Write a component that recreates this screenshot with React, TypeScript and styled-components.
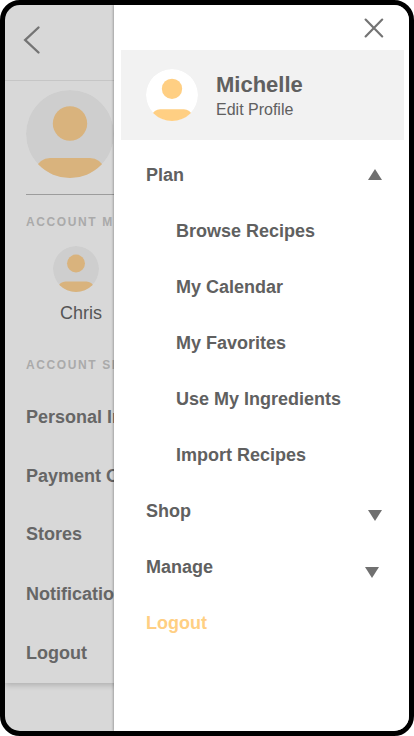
import React, { useId } from "react";
import styled, { createGlobalStyle } from "styled-components";

const GlobalStyle = createGlobalStyle`
  *, *::before, *::after { box-sizing: border-box; }
  body {
    margin: 0;
    background: #fff;
    font-family: "Liberation Sans", Arial, sans-serif;
    color: #606060;
  }
`;

const Device = styled.div`
  display: flex;
  width: 414px;
  height: 736px;
  overflow: hidden;
  border: 5px solid #000;
  border-radius: 20px;
  background: #d8d8d8;
`;

const AccountPage = styled.main`
  flex: 0 0 109px;
  overflow: hidden;
  white-space: nowrap;
`;

const AccountSheet = styled.div`
  width: 404px;
  height: 678px;
  box-shadow: 0 2px 6px rgba(0, 0, 0, 0.2);
`;

const TopBar = styled.header`
  height: 76px;
  padding: 20px 0 0 18px;
  border-bottom: 1px solid #c6c6c6;
`;

const IconButton = styled.button`
  display: block;
  padding: 0;
  border: 0;
  background: none;
  color: #747474;
  line-height: 0;
`;

const Hero = styled.div`
  height: 114px;
  margin-left: 21px;
  padding-top: 9px;
  border-bottom: 1px solid #9c9c9c;
`;

const SectionLabel = styled.h2<{ $top: number }>`
  margin: ${(p) => p.$top}px 0 0 21px;
  font-size: 12px;
  line-height: 14px;
  font-weight: 700;
  letter-spacing: 1.6px;
  color: #aaa;
`;

const Member = styled.div`
  display: flex;
  flex-direction: column;
  align-items: flex-start;
  margin: 17px 0 0 48px;
  gap: 10px;
`;

const MemberName = styled.span`
  margin-left: 7px;
  font-size: 18px;
  line-height: 22px;
  color: #555;
`;

const SettingsList = styled.ul`
  display: grid;
  grid-template-rows: 59px 58px 60px 59px 59px;
  align-items: start;
  margin: 16px 0 0;
  padding: 19px 0 0 21px;
  list-style: none;
`;

const SettingsItem = styled.li`
  font-size: 18px;
  line-height: 21px;
  font-weight: 700;
  color: #666;
`;

const Drawer = styled.aside`
  flex: 1;
  background: #fff;
  box-shadow: -1px 0 2px rgba(0, 0, 0, 0.25);
  z-index: 1;
`;

const DrawerTop = styled.div`
  display: flex;
  justify-content: flex-end;
  align-items: center;
  height: 45px;
  padding-right: 25px;
`;

const Profile = styled.div`
  display: flex;
  align-items: center;
  height: 90px;
  margin: 0 5px 0 7px;
  padding-left: 25px;
  gap: 18px;
  background: #f2f2f2;
`;

const ProfileText = styled.div`
  padding-top: 1px;
`;

const ProfileName = styled.div`
  font-size: 22px;
  line-height: 28px;
  font-weight: 700;
`;

const EditLink = styled.div`
  font-size: 16px;
  line-height: 22px;
`;

const Menu = styled.nav`
  margin-top: 7px;
`;

const MenuRow = styled.div<{ $nested?: boolean; $accent?: boolean }>`
  display: flex;
  justify-content: space-between;
  height: 56px;
  padding-left: ${(p) => (p.$nested ? 62 : 32)}px;
  font-size: 18px;
  line-height: 56px;
  font-weight: 700;
  color: ${(p) => (p.$accent ? "#ffcf83" : "#606060")};
`;

const Arrow = styled.svg<{ $top: number; $right: number }>`
  display: block;
  width: 14px;
  height: 11px;
  margin: ${(p) => p.$top}px ${(p) => p.$right}px 0 0;
  fill: #707070;
`;

const AvatarSvg = styled.svg`
  display: block;
  flex-shrink: 0;
`;

interface AvatarProps {
  size: number;
  disc: string;
  figure: string;
}

function Avatar({ size, disc, figure }: AvatarProps) {
  const id = useId();
  return (
    <AvatarSvg width={size} height={size} viewBox="0 0 88 88">
      <clipPath id={id}>
        <circle cx="44" cy="44" r="44" />
      </clipPath>
      <g clipPath={`url(#${id})`}>
        <circle cx="44" cy="44" r="44" fill={disc} />
        <circle cx="44" cy="33.5" r="17.2" fill={figure} />
        <path d="M8 80Q14 68 24 68H64Q74 68 80 80V88H8Z" fill={figure} />
      </g>
    </AvatarSvg>
  );
}

const settings = ["Personal Information", "Payment Options", "Stores", "Notifications", "Logout"];
const recipes = ["Browse Recipes", "My Calendar", "My Favorites", "Use My Ingredients", "Import Recipes"];

export default function App() {
  return (
    <>
      <GlobalStyle />
      <Device>
        <AccountPage>
          <AccountSheet>
            <TopBar>
              <IconButton aria-label="Back">
                <svg width="18" height="30" viewBox="0 0 18 30" fill="none" stroke="currentColor" strokeWidth="2.4" strokeLinecap="round">
                  <path d="M15.5 2.5 2.2 15 15.5 27.5" />
                </svg>
              </IconButton>
            </TopBar>
            <Hero>
              <Avatar size={88} disc="#cecece" figure="#d9b37d" />
            </Hero>
            <SectionLabel $top={20}>ACCOUNT MEMBERS</SectionLabel>
            <Member>
              <Avatar size={46} disc="#cecece" figure="#d9b37d" />
              <MemberName>Chris</MemberName>
            </Member>
            <SectionLabel $top={34}>ACCOUNT SETTINGS</SectionLabel>
            <SettingsList>
              {settings.map((label) => (
                <SettingsItem key={label}>{label}</SettingsItem>
              ))}
            </SettingsList>
          </AccountSheet>
        </AccountPage>
        <Drawer>
          <DrawerTop>
            <IconButton aria-label="Close">
              <svg width="20" height="20" viewBox="0 0 20 20" fill="none" stroke="currentColor" strokeWidth="2.2" strokeLinecap="round">
                <path d="M1.6 1.6 18.2 18.4M18.2 1.6 1.6 18.4" />
              </svg>
            </IconButton>
          </DrawerTop>
          <Profile>
            <Avatar size={52} disc="#fff" figure="#ffcf83" />
            <ProfileText>
              <ProfileName>Michelle</ProfileName>
              <EditLink>Edit Profile</EditLink>
            </ProfileText>
          </Profile>
          <Menu>
            <MenuRow>
              Plan
              <Arrow $top={22} $right={27} viewBox="0 0 14 11"><path d="M7 0 14 11H0Z" /></Arrow>
            </MenuRow>
            {recipes.map((label) => (
              <MenuRow key={label} $nested>{label}</MenuRow>
            ))}
            <MenuRow>
              Shop
              <Arrow $top={27} $right={27} viewBox="0 0 14 11"><path d="M0 0H14L7 11Z" /></Arrow>
            </MenuRow>
            <MenuRow>
              Manage
              <Arrow $top={28} $right={30} viewBox="0 0 14 11"><path d="M0 0H14L7 11Z" /></Arrow>
            </MenuRow>
            <MenuRow $accent>Logout</MenuRow>
          </Menu>
        </Drawer>
      </Device>
    </>
  );
}
